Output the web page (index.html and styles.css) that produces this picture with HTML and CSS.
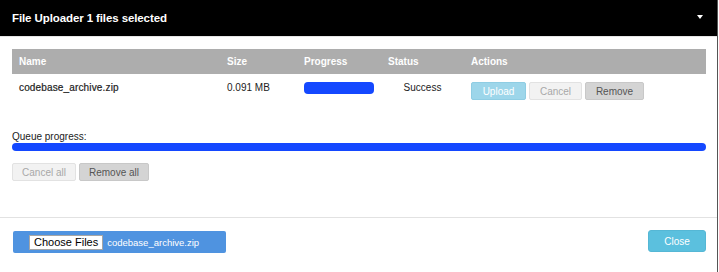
FILE: index.html
```html
<!DOCTYPE html>
<html lang="en">
<head>
    <meta charset="UTF-8">
    <title>File Uploader</title>
    <link rel="stylesheet" href="styles.css">
</head>
<body>
    <div class="modal">
        <div class="modal-header">
            <span class="modal-title">File Uploader 1 files selected</span>
            <span class="caret"></span>
        </div>

        <div class="modal-body">
            <table class="queue-table">
                <thead>
                    <tr>
                        <th class="col-name">Name</th>
                        <th class="col-size">Size</th>
                        <th class="col-progress">Progress</th>
                        <th class="col-status">Status</th>
                        <th class="col-actions">Actions</th>
                    </tr>
                </thead>
                <tbody>
                    <tr>
                        <td class="file-name">codebase_archive.zip</td>
                        <td>0.091 MB</td>
                        <td><div class="progress small"><div class="progress-bar"></div></div></td>
                        <td class="status">Success</td>
                        <td>
                            <div class="actions">
                                <button class="btn btn-upload">Upload</button>
                                <button class="btn btn-disabled">Cancel</button>
                                <button class="btn btn-remove">Remove</button>
                            </div>
                        </td>
                    </tr>
                </tbody>
            </table>

            <div class="queue">
                <div class="queue-label">Queue progress:</div>
                <div class="progress"><div class="progress-bar"></div></div>
                <div class="actions">
                    <button class="btn btn-disabled wide">Cancel all</button>
                    <button class="btn btn-remove wide">Remove all</button>
                </div>
            </div>
        </div>

        <div class="modal-footer">
            <div class="file-picker">
                <span class="choose-button">Choose Files</span>
                <span class="chosen">codebase_archive.zip</span>
            </div>
            <button class="btn btn-close">Close</button>
        </div>
    </div>
</body>
</html>
```

FILE: styles.css
```css
* {
    margin: 0;
    padding: 0;
    box-sizing: border-box;
}

body {
    font-family: "Liberation Sans", Arial, sans-serif;
    background-color: #ffffff;
    color: #222;
    width: 719px;
    height: 272px;
    overflow: hidden;
}

.modal {
    width: 718px;
    height: 272px;
    border-right: 1px solid #555;
    display: flex;
    flex-direction: column;
}

.modal-header {
    background-color: #000;
    height: 37px;
    padding: 0 14px 0 12px;
    display: flex;
    align-items: center;
    justify-content: space-between;
    border-bottom: 1px solid #e5e5e5;
}

.modal-title {
    color: #fff;
    font-weight: bold;
    font-size: 11.5px;
    letter-spacing: -0.1px;
}

.caret {
    width: 0;
    height: 0;
    border-left: 3px solid transparent;
    border-right: 3px solid transparent;
    border-top: 4px solid #fff;
    margin-top: -2px;
}

.modal-body {
    padding: 12px 11px 0 12px;
    height: 181px;
    border-bottom: 1px solid #e2e2e2;
}

.queue-table {
    width: 694px;
    border-collapse: collapse;
    font-size: 10px;
}

.queue-table th {
    background-color: #adadad;
    color: #fff;
    font-weight: bold;
    text-align: left;
    height: 25px;
    padding: 0 7px;
}

.col-name { width: 208px; }
.col-size { width: 77px; }
.col-progress { width: 83px; }
.col-status { width: 83px; }

.queue-table td {
    height: 30px;
    padding: 8px 7px 0;
    vertical-align: top;
}

.file-name {
    color: #222;
    letter-spacing: 0.15px;
    -webkit-text-stroke: 0.2px #222;
}

.status {
    text-align: center;
}

.progress {
    height: 8px;
    background-color: #f0f0f0;
    border-radius: 4px;
    overflow: hidden;
}

.progress.small {
    width: 70px;
    height: 12px;
    border-radius: 4px;
}

.progress-bar {
    width: 100%;
    height: 100%;
    background-color: #1448ff;
}

.actions {
    display: flex;
    gap: 3px;
}

.btn {
    font-family: "Liberation Sans", Arial, sans-serif;
    font-size: 10px;
    height: 18px;
    border-radius: 2px;
    border: 1px solid transparent;
    cursor: pointer;
}

.btn-upload {
    width: 55px;
    background-color: #9dd6ea;
    border-color: #8fcde3;
    color: #fff;
}

.btn-disabled {
    width: 53px;
    background-color: #f2f2f2;
    border-color: #e2e2e2;
    color: #a8a8a8;
}

.btn-remove {
    width: 59px;
    background-color: #d4d4d4;
    border-color: #c8c8c8;
    color: #555;
}

.btn.wide { width: 64px; }
.btn-remove.wide { width: 70px; }

.queue {
    margin-top: 27px;
}

.queue-label {
    font-size: 10px;
    color: #222;
    margin-bottom: 1px;
}

.queue .progress {
    width: 694px;
    margin-bottom: 12px;
}

.modal-footer {
    flex: 1;
    padding: 13px 11px 0 13px;
    display: flex;
    justify-content: space-between;
    align-items: flex-start;
}

.file-picker {
    width: 213px;
    height: 22px;
    background-color: #4f93e0;
    border-radius: 2px;
    display: flex;
    align-items: center;
    padding-left: 16px;
    gap: 4px;
}

.choose-button {
    background-color: #fff;
    border: 1px solid #a5a5a5;
    color: #000;
    font-size: 11px;
    height: 15px;
    line-height: 13px;
    padding: 0 4px;
}

.chosen {
    color: #fff;
    font-size: 9.5px;
}

.btn-close {
    width: 58px;
    height: 22px;
    background-color: #5bc0de;
    border-color: #55b7d5;
    color: #fff;
    border-radius: 3px;
    font-size: 10px;
    margin-top: -1px;
}
```
